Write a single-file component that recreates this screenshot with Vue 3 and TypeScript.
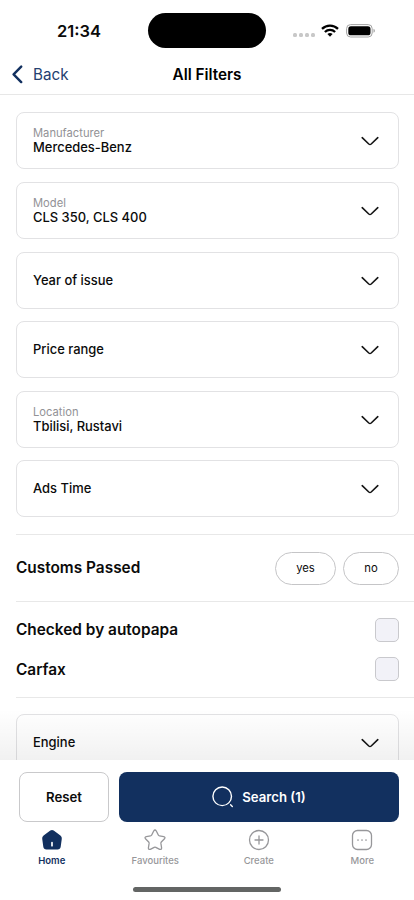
<script setup lang="ts">
import { ref } from 'vue'

interface Filter {
  label: string
  value?: string
}

const filters: Filter[] = [
  { label: 'Manufacturer', value: 'Mercedes-Benz' },
  { label: 'Model', value: 'CLS 350, CLS 400' },
  { label: 'Year of issue' },
  { label: 'Price range' },
  { label: 'Location', value: 'Tbilisi, Rustavi' },
  { label: 'Ads Time' },
]

const tabs = ['Home', 'Favourites', 'Create', 'More']
const activeTab = ref('Home')

const checks = ref([
  { label: 'Checked by autopapa', on: false },
  { label: 'Carfax', on: false },
])
</script>

<template>
  <div class="screen">
    <header class="top">
      <div class="status">
        <span class="time">21:34</span>
        <span class="island"></span>
        <div class="signals">
          <span class="dots"><i v-for="n in 4" :key="n"></i></span>
          <svg class="wifi" width="18" height="13" viewBox="0 0 18 13" fill="none" stroke="#000" stroke-width="2.3">
            <path d="M1 4.8A11.6 11.6 0 0 1 17 4.8" />
            <path d="M3.9 8A7.4 7.4 0 0 1 14.1 8" />
            <path d="M9 12.7 6.4 10.1a3.9 3.9 0 0 1 5.2 0z" fill="#000" stroke="none" />
          </svg>
          <svg class="battery" width="30" height="14" viewBox="0 0 30 14">
            <rect x=".6" y=".6" width="25.6" height="12.4" rx="4" fill="none" stroke="#a3a3a3" />
            <rect x="2.3" y="2.3" width="22.2" height="9" rx="2.6" fill="#000" />
            <path d="M27.5 4.8c1.9.6 1.9 3.4 0 4z" fill="#a3a3a3" />
          </svg>
        </div>
      </div>
      <div class="nav">
        <button class="back">
          <svg width="11" height="19" viewBox="0 0 11 19" fill="none" stroke="#12305f" stroke-width="2.4" stroke-linecap="round" stroke-linejoin="round">
            <path d="M9.2 1.6 1.6 9.3l7.6 7.8" />
          </svg>
          <span>Back</span>
        </button>
        <h1>All Filters</h1>
      </div>
    </header>

    <main class="content">
      <section class="filters">
        <button v-for="f in filters" :key="f.label" class="card">
          <span class="card-text">
            <small v-if="f.value">{{ f.label }}</small>
            <span class="value">{{ f.value ?? f.label }}</span>
          </span>
          <svg class="chevron" width="18" height="10" viewBox="0 0 18 10" fill="none" stroke="#151515" stroke-width="1.6" stroke-linecap="round" stroke-linejoin="round">
            <path d="m1.2 1.7 6.6 6.3q1.2 1 2.4 0l6.6-6.3" />
          </svg>
        </button>
      </section>

      <section class="customs">
        <h2>Customs Passed</h2>
        <div class="pills">
          <button class="pill yes">yes</button>
          <button class="pill no">no</button>
        </div>
      </section>

      <section class="checks">
        <label v-for="c in checks" :key="c.label" class="check">
          <h2>{{ c.label }}</h2>
          <input v-model="c.on" type="checkbox" />
        </label>
      </section>

      <section class="more">
        <button class="card">
          <span class="card-text"><span class="value">Engine</span></span>
          <svg class="chevron" width="18" height="10" viewBox="0 0 18 10" fill="none" stroke="#151515" stroke-width="1.6" stroke-linecap="round" stroke-linejoin="round">
            <path d="m1.2 1.7 6.6 6.3q1.2 1 2.4 0l6.6-6.3" />
          </svg>
        </button>
      </section>
    </main>

    <footer class="bottom">
      <div class="actions">
        <button class="reset">Reset</button>
        <button class="search">
          <svg width="22" height="22" viewBox="0 0 22 22" fill="none" stroke="#fff" stroke-width="1.4" stroke-linecap="round">
            <circle cx="10.2" cy="10.3" r="9.3" />
            <path d="m18.6 18.8 1.7 1.6" />
          </svg>
          <span>Search (1)</span>
        </button>
      </div>
      <nav class="tabs">
        <button v-for="t in tabs" :key="t" class="tab" :class="{ active: t === activeTab }" @click="activeTab = t">
          <svg width="22" height="22" viewBox="0 0 22 22" fill="none" stroke="currentColor" stroke-width="1.3" stroke-linecap="round" stroke-linejoin="round">
            <template v-if="t === 'Home'">
              <path d="M9.3 1.5q1.7-1.1 3.4 0l6.7 4.9q1.7 1.3 1.4 3.4l-1.1 8q-.5 2.7-3.1 2.7H5.4q-2.6 0-3.1-2.7l-1.1-8q-.3-2.1 1.4-3.4z" fill="currentColor" stroke="none" />
              <path d="M11 13.7v3" stroke="#fff" stroke-width="1.7" />
            </template>
            <path v-else-if="t === 'Favourites'" d="M9.7 2q1.3-2 2.6 0l2 4q.4.8 1.2.9l4.2.7q2.1.5.8 2.1l-3.2 3.3q-.5.6-.4 1.4l.7 4.4q.1 2.2-1.9 1.5l-3.9-2q-.8-.4-1.6 0l-3.9 2q-2 .7-1.9-1.5l.7-4.4q.1-.8-.4-1.4L1.5 9.7q-1.3-1.6.8-2.1l4.2-.7q.8-.1 1.2-.9z" />
            <template v-else-if="t === 'Create'">
              <circle cx="11" cy="11" r="9.5" />
              <path d="M11 7v8M7 11h8" />
            </template>
            <template v-else>
              <rect x="1.5" y="1.5" width="19" height="19" rx="5" />
              <path d="M7 11h.01M11 11h.01M15 11h.01" stroke-width="1.7" />
            </template>
          </svg>
          <span>{{ t }}</span>
        </button>
      </nav>
      <div class="home-bar"></div>
    </footer>
  </div>
</template>

<style>
body {
  margin: 0;
  background: #fff;
}
</style>

<style scoped>
* {
  box-sizing: border-box;
}
.screen {
  display: flex;
  flex-direction: column;
  width: 414px;
  height: 900px;
  overflow: hidden;
  background: #fff;
  color: #0b0b0b;
  font-family: Inter, 'Liberation Sans', sans-serif;
}
button {
  margin: 0;
  padding: 0;
  border: 0;
  background: none;
  color: inherit;
  font: inherit;
  text-align: left;
}
svg {
  display: block;
  flex: none;
}
h1,
h2 {
  margin: 0;
  font-weight: 600;
}
.top {
  flex: none;
  height: 95px;
  border-bottom: 1px solid #e7e7e7;
}
.status {
  display: grid;
  grid-template-columns: 148px 118px 148px;
  align-items: center;
  height: 48px;
  padding-top: 13px;
}
.time {
  padding-left: 57px;
  font-size: 16.5px;
  font-weight: 600;
  line-height: 20px;
}
.island {
  height: 35px;
  border-radius: 18px;
  background: #000;
}
.signals {
  display: flex;
  align-items: center;
  padding-left: 27px;
}
.dots {
  display: flex;
  gap: 2px;
  padding-top: 9px;
  margin-right: 6px;
}
.dots i {
  width: 4px;
  height: 4px;
  border-radius: 1.5px;
  background: #c8c8c8;
}
.battery {
  margin-left: 7px;
}
.nav {
  display: grid;
  grid-template-columns: 1fr auto 1fr;
  align-items: center;
  height: 46px;
  padding: 6px 12px 0;
}
.back {
  display: flex;
  align-items: center;
  gap: 10px;
  color: #24406f;
  font-size: 15.2px;
}
h1 {
  font-size: 15.3px;
  color: #000;
}
.content {
  flex: none;
  height: 665px;
  overflow: hidden;
  padding-top: 17.3px;
}
.filters {
  display: grid;
  gap: 12.63px;
  padding: 0 15px 0 15.5px;
}
.card {
  display: flex;
  align-items: center;
  justify-content: space-between;
  width: 100%;
  height: 57px;
  padding: 0 19.5px 0 16.5px;
  border: 1px solid #e2e2e4;
  border-radius: 8px;
}
.card-text {
  display: flex;
  flex-direction: column;
}
.chevron {
  margin-top: 1px;
}
small {
  color: #929296;
  font-size: 11.2px;
  line-height: 14px;
}
.value {
  font-size: 12.95px;
  font-weight: 500;
  line-height: 15px;
}
.customs {
  display: flex;
  align-items: center;
  justify-content: space-between;
  height: 66.5px;
  margin: 17px 0 0 16px;
  padding-right: 15px;
  border-top: 1px solid #e8e8e8;
}
h2 {
  font-size: 15.4px;
  line-height: 20px;
}
.pills {
  display: flex;
  gap: 7px;
}
.pill {
  height: 33px;
  border: 1px solid #c5c5c7;
  border-radius: 17px;
  font-size: 11.3px;
  text-align: center;
}
.yes {
  width: 61px;
}
.no {
  width: 56px;
}
.checks {
  display: grid;
  align-content: start;
  gap: 15.5px;
  height: 96.4px;
  margin-left: 16px;
  padding: 16px 15px 0 0;
  border-top: 1px solid #e8e8e8;
}
.check {
  display: flex;
  align-items: center;
  justify-content: space-between;
}
.check h2 {
  padding-top: 1px;
}
input {
  appearance: none;
  width: 24px;
  height: 24px;
  margin: 0;
  border: 1px solid #c9c9cd;
  border-radius: 5px;
  background: #f2f2f8;
}
input:checked {
  background: #12305f;
}
.more {
  position: relative;
  padding: 17px 15px 0 15.5px;
}
.more::before {
  content: '';
  position: absolute;
  top: 0;
  left: 16px;
  right: 0;
  height: 1px;
  background: #e8e8e8;
}
.more::after {
  content: '';
  position: absolute;
  top: 12px;
  left: 0;
  right: 0;
  height: 51px;
  background: linear-gradient(transparent, rgba(0, 0, 0, 0.055));
  pointer-events: none;
}
.bottom {
  flex: none;
  height: 140px;
  background: #fff;
}
.actions {
  display: grid;
  grid-template-columns: 90px 1fr;
  gap: 10px;
  padding: 12px 15px 0 19px;
}
.reset,
.search {
  display: flex;
  align-items: center;
  justify-content: center;
  height: 50px;
  border-radius: 8px;
  font-size: 13.2px;
  font-weight: 600;
}
.reset {
  border: 1px solid #c9c9cb;
}
.search {
  gap: 8px;
  background: #12305f;
  color: #fff;
}
.tabs {
  display: grid;
  grid-template-columns: repeat(4, 1fr);
  padding-top: 7px;
}
.tab {
  display: flex;
  flex-direction: column;
  align-items: center;
  gap: 3px;
  color: #97979a;
  font-size: 9.5px;
  font-weight: 500;
  line-height: 14px;
}
.tab.active {
  color: #12305f;
  font-weight: 600;
}
.home-bar {
  width: 148px;
  height: 5px;
  margin: 19px auto 0;
  border-radius: 3px;
  background: #636564;
}
</style>
